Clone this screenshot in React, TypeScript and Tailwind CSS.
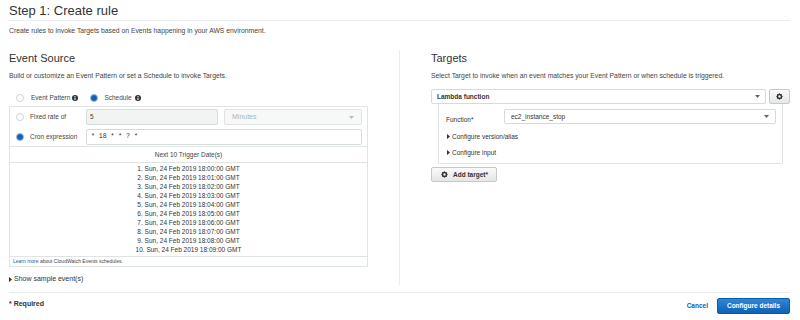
import React from 'react';

// Scheduled trigger preview (cron "* 18 * * ? *")
const TRIGGER_DATES = Array.from({ length: 10 }, (_, i) => `${i + 1}. Sun, 24 Feb 2019 18:0${i}:00 GMT`);

const Radio: React.FC<{ checked?: boolean }> = ({ checked }) =>
  checked ? (
    <span className="block w-[8px] h-[8px] rounded-full bg-[#0f62b8] border border-[#9bbde0] shrink-0" />
  ) : (
    <span className="block w-[8px] h-[8px] rounded-full bg-white border border-[#cfd5d8] shrink-0" />
  );

const Info = () => (
  <svg width="6" height="6" viewBox="0 0 12 12" className="block shrink-0">
    <circle cx="6" cy="6" r="6" fill="#333" />
    <rect x="5" y="5" width="2" height="5" fill="#fff" />
    <rect x="5" y="2" width="2" height="2" fill="#fff" />
  </svg>
);

const Caret: React.FC<{ color?: string }> = ({ color = '#666' }) => (
  <svg width="5" height="3" viewBox="0 0 10 6" className="shrink-0">
    <path d="M0 0h10L5 6z" fill={color} />
  </svg>
);

const Expand = () => (
  <svg width="3" height="5" viewBox="0 0 6 10" className="shrink-0">
    <path d="M0 0l6 5-6 5z" fill="#333" />
  </svg>
);

const Gear = () => (
  <svg width="7" height="7" viewBox="0 0 16 16" className="shrink-0">
    {[0, 45, 90, 135, 180, 225, 270, 315].map((a) => (
      <rect key={a} x="6.9" y="1" width="2.2" height="3" fill="#333" transform={`rotate(${a} 8 8)`} />
    ))}
    <circle cx="8" cy="8" r="4.6" fill="none" stroke="#333" strokeWidth="3.4" />
  </svg>
);

const Collapsible: React.FC<{ label: string; className?: string }> = ({ label, className }) => (
  <div className={`flex items-center gap-[2px] ${className ?? ''}`}>
    <Expand />
    <span>{label}</span>
  </div>
);

const App: React.FC = () => {
  return (
    <div className="w-[800px] h-[320px] overflow-hidden bg-white text-[#444] font-['Liberation_Sans',Arial,sans-serif] pl-[9px] pr-[10px]">
      {/* Page header */}
      <h1 className="h-[21px] border-b border-[#eaeded] text-[13px] leading-[16px] pt-[3px] text-[#333]">
        Step 1: Create rule
      </h1>
      <div className="mt-[6px] h-[8px] leading-[8px] text-[6.8px]">
        Create rules to invoke Targets based on Events happening in your AWS environment.
      </div>

      <div className="flex h-[235px] mt-[15px]">
        {/* Event Source column */}
        <div className="w-[391px] border-r border-[#eaeded] pr-[31px]">
          <h2 className="mt-[1px] h-[14px] leading-[14px] text-[11px] text-[#333]">Event Source</h2>
          <div className="mt-[7px] h-[8px] leading-[8px] text-[6.8px]">
            Build or customize an Event Pattern or set a Schedule to invoke Targets.
          </div>

          <div className="mt-[12px] h-[12px] flex items-center text-[6.5px] pl-[7px]">
            <Radio />
            <span className="ml-[7px]">Event Pattern</span>
            <span className="ml-[2px]"><Info /></span>
            <span className="ml-[12px]"><Radio checked /></span>
            <span className="ml-[6px]">Schedule</span>
            <span className="ml-[3px]"><Info /></span>
          </div>

          <div className="mt-[2px] border border-[#e1e4e4] text-[6.5px]">
            <div className="h-[20px] flex items-center pl-[6px]">
              <Radio />
              <span className="ml-[6px] w-[56px]">Fixed rate of</span>
              <div className="w-[132px] h-[16px] bg-[#f2f3f3] border border-[#d5dbdb] rounded-[2px] flex items-center px-[3px] text-[#444]">
                5
              </div>
              <div className="ml-[6px] w-[138px] h-[16px] bg-[#f7f8f8] border border-[#e1e4e4] rounded-[2px] flex items-center justify-between px-[7px] text-[#aab7b8]">
                <span className="text-[7px]">Minutes</span>
                <Caret color="#bbb" />
              </div>
            </div>
            <div className="h-[20px] flex items-center pl-[6px] border-b border-[#e1e4e4]">
              <Radio checked />
              <span className="ml-[6px] w-[56px]">Cron expression</span>
              <div className="w-[276px] h-[16px] bg-white border border-[#d5dbdb] rounded-[2px] flex items-center px-[4px] font-['Liberation_Mono',monospace] text-[6.5px] text-[#333] whitespace-pre">
                * 18 * * ? *
              </div>
            </div>
            <div className="h-[16px] flex items-center justify-center border-b border-[#e1e4e4]">
              Next 10 Trigger Date(s)
            </div>
            <div className="pt-[1px] pb-[2px] border-b border-[#e1e4e4] text-center text-[6.5px] text-[#333]">
              {TRIGGER_DATES.map((d) => (
                <div key={d} className="h-[9px] leading-[9px]">{d}</div>
              ))}
            </div>
            <div className="h-[9px] leading-[9px] pl-[3px] text-[5px]">
              <span className="text-[#0a5fb0]">Learn more</span> about CloudWatch Events schedules.
            </div>
          </div>

          <Collapsible label="Show sample event(s)" className="mt-[7px] h-[10px] text-[7px] text-[#333]" />
        </div>

        {/* Targets column */}
        <div className="flex-1 pl-[31px]">
          <h2 className="mt-[1px] h-[14px] leading-[14px] text-[11px] text-[#333]">Targets</h2>
          <div className="mt-[7px] h-[8px] leading-[8px] text-[6.8px]">
            Select Target to invoke when an event matches your Event Pattern or when schedule is triggered.
          </div>

          <div className="mt-[9px] h-[15px] flex gap-[3px]">
            <div className="flex-1 border border-[#d5dbdb] rounded-[2px] flex items-center justify-between px-[5px] text-[6.5px] font-bold text-[#333]">
              <span>Lambda function</span>
              <Caret />
            </div>
            <button className="w-[21px] border border-[#c5c9ca] rounded-[2px] bg-gradient-to-b from-[#fafafa] to-[#e6e8e8] flex items-center justify-center">
              <Gear />
            </button>
          </div>

          <div className="mx-[7px] h-[60px] border border-t-0 border-[#e1e4e4] rounded-b-[2px] text-[6.5px] text-[#333]">
            <div className="pt-[5px] flex h-[20px]">
              <span className="w-[65px] pl-[7px] self-end leading-[8px]">Function*</span>
              <div className="flex-1 mr-[6px] h-[15px] border border-[#d5dbdb] rounded-[2px] flex items-center justify-between px-[6px]">
                <span>ec2_instance_stop</span>
                <Caret />
              </div>
            </div>
            <Collapsible label="Configure version/alias" className="mt-[8px] h-[9px] pl-[8px]" />
            <Collapsible label="Configure input" className="mt-[7px] h-[9px] pl-[8px]" />
          </div>

          <button className="mt-[3px] w-[66px] h-[15px] border border-[#c5c9ca] rounded-[2px] bg-gradient-to-b from-[#fafafa] to-[#e4e6e6] flex items-center pl-[9px] gap-[5px] text-[6.5px] font-bold text-[#333]">
            <Gear />
            <span>Add target*</span>
          </button>
        </div>
      </div>

      {/* Footer */}
      <div className="mt-[7px] border-t border-[#eaeded] flex justify-between">
        <div className="mt-[7px] h-[8px] leading-[8px] text-[7px] font-bold text-[#333]">* Required</div>
        <div className="mt-[5px] h-[16px] flex items-center gap-[9px]">
          <span className="text-[6.5px] font-bold text-[#0a5fb0]">Cancel</span>
          <button className="w-[73px] h-[16px] rounded-[2px] border border-[#0a5aa8] bg-gradient-to-b from-[#2f86d8] to-[#0b62b6] text-white text-[6.5px] font-bold flex items-center justify-center">
            Configure details
          </button>
        </div>
      </div>
    </div>
  );
};

export default App;
